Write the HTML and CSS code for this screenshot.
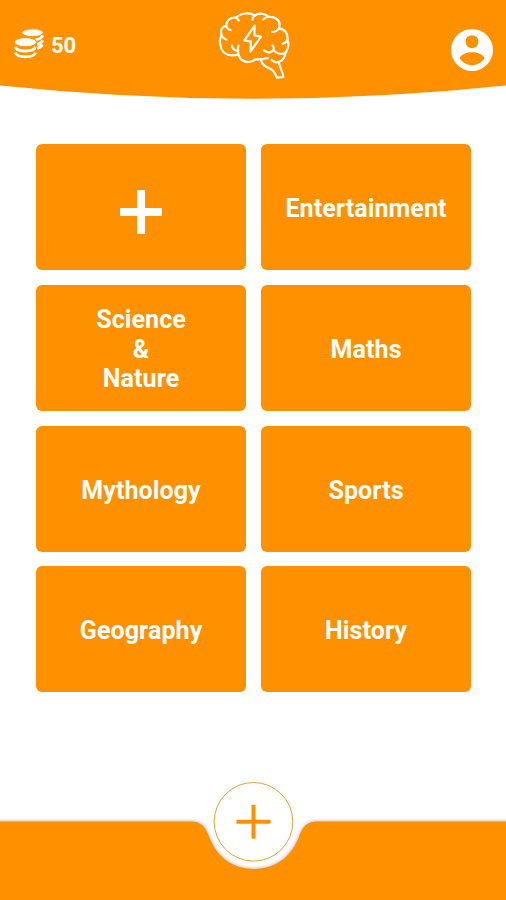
FILE: index.html
```html
<!DOCTYPE html>
<html lang="en">
<head>
<meta charset="utf-8">
<title>Quiz categories</title>
<link rel="stylesheet" href="styles.css">
</head>
<body>
<div class="app">
  <header class="header">
    <svg class="header-bg" viewBox="0 0 506 100"><path d="M0 0H506V85.5Q379 98.8 253 98.8T0 85.5Z"/></svg>
    <div class="coins">
      <svg class="coins-icon" viewBox="0 0 92 94">
        <ellipse class="solid" cx="57" cy="14" rx="33" ry="12"/>
        <path d="M88 22Q84 34 66 35M88 37Q84 47 71 50M87 50Q83 58 71 61"/>
        <ellipse class="solid" cx="35" cy="43" rx="34" ry="14"/>
        <path d="M4 58C10 74 60 74 66 58M4 75C10 92 60 92 66 75"/>
      </svg>
      <span class="coins-count">50</span>
    </div>
    <svg class="brain" viewBox="0 0 300 252">
      <path d="M97 163C78 171 47 164 44 138C40 126 41 114 47 107C42 87 49 79 61 77C60 61 75 50 91 53C103 39 131 36 146 47C157 37 180 40 187 51C206 49 221 59 221 75C221 79 220 82 218 86C235 87 247 99 244 119C251 134 245 150 238 158C239 169 231 181 218 186C221 203 231 214 232 231L213 233C206 219 204 212 194 207C178 201 166 192 165 178"/>
      <path d="M97 137C95 148 94 163 102 174C112 188 136 190 148 178C158 179 174 177 185 174M47 107C51 113 54 117 61 119M61 77C62 84 67 89 74 90M91 53L98 61M146 47C141 51 139 54 139 59M187 51C180 51 175 54 172 58M218 86C214 92 207 96 198 96M244 119C242 125 237 129 230 131M78 137C79 147 87 153 97 152M174 151C183 161 199 158 203 148C204 143 202 139 200 136M203 150C211 162 226 164 239 158M197 180C203 186 211 188 218 186"/>
      <path d="M146 77L115 121L135 125L133 155L165 110L145 106Z"/>
    </svg>
    <svg class="profile" viewBox="0 0 42 42">
      <circle class="disc" cx="21" cy="21" r="21"/>
      <circle cx="21" cy="12.7" r="6.5"/>
      <path d="M8.5 29C12 21.3 30 21.3 33.5 29C28 38.5 14 38.5 8.5 29Z"/>
    </svg>
  </header>
  <main class="grid">
    <button class="card" aria-label="Add category"><svg class="plus" viewBox="0 0 42 44"><path d="M0 22H42M21 0V44"/></svg></button>
    <button class="card">Entertainment</button>
    <button class="card">Science<br>&amp;<br>Nature</button>
    <button class="card">Maths</button>
    <button class="card">Mythology</button>
    <button class="card">Sports</button>
    <button class="card">Geography</button>
    <button class="card">History</button>
  </main>
  <footer class="footer">
    <svg class="bar" viewBox="0 0 506 130">
      <defs>
        <clipPath id="bar-clip"><path d="M0 51.5H192Q203 51.5 208 64C215 85 231 99 254 99S293 85 300 64Q305 51.5 316 51.5H506V130H0Z"/></clipPath>
        <filter id="soft" x="-10%" y="-50%" width="120%" height="200%"><feGaussianBlur stdDeviation="2"/></filter>
      </defs>
      <path class="bar-shadow" filter="url(#soft)" d="M-9 51.5H192Q203 51.5 208 64C215 85 231 99 254 99S293 85 300 64Q305 51.5 316 51.5H515V140H-9Z"/>
      <rect class="bar-fill" width="506" height="130" clip-path="url(#bar-clip)"/>
      <circle class="ring" cx="253.5" cy="51.8" r="39.3"/>
      <path class="ring-plus" d="M236.5 51.8H270.5M253.5 34.8V68.8"/>
    </svg>
  </footer>
</div>
</body>
</html>
```
FILE: styles.css
```css
body {
  margin: 0;
  background: #fff;
  font-family: Roboto, sans-serif;
}

.app {
  display: flex;
  flex-direction: column;
  height: 900px;
  overflow: hidden;
}

.header {
  position: relative;
  display: flex;
  justify-content: space-between;
  height: 100px;
  box-sizing: border-box;
  padding: 0 13px 0 14px;
}

.header-bg {
  position: absolute;
  inset: 0;
  width: 100%;
  height: 100px;
  fill: #ff9100;
}

.coins {
  position: relative;
  display: flex;
  align-items: center;
  gap: 7px;
  width: 191px;
  height: 30px;
  margin-top: 29px;
  color: #fff;
}

.coins-icon {
  width: 30px;
  height: 31px;
  margin-top: -2px;
  fill: none;
  stroke: #fff;
  stroke-width: 9;
}

.coins-icon .solid {
  fill: #fff;
  stroke: #ff9100;
  stroke-width: 3;
}

.coins-count {
  margin-top: 3px;
  font-size: 22px;
  font-weight: 700;
  line-height: 26px;
}

.brain {
  position: relative;
  width: 100px;
  height: 84px;
  margin-left: 1px;
  fill: none;
  stroke: #fff;
  stroke-width: 6.5;
  stroke-linecap: round;
  stroke-linejoin: round;
}

.profile {
  position: relative;
  width: 42px;
  height: 42px;
  margin: 29px 0 0 145px;
  fill: #ff9100;
}

.profile .disc {
  fill: #fff;
}

.grid {
  display: grid;
  grid-template-columns: 210.5px 210.5px;
  grid-auto-rows: 126px;
  gap: 14.75px 14.5px;
  margin: 44px 0 0 35.8px;
}

.card {
  display: flex;
  align-items: center;
  justify-content: center;
  padding: 3.6px 0 0;
  border: 0;
  border-radius: 6px;
  background: #ff9100;
  color: #fff;
  font: 700 25px/29.5px Roboto, sans-serif;
  letter-spacing: 0.1px;
  text-align: center;
}

.plus {
  width: 42px;
  height: 44px;
  margin-top: 6px;
  stroke: #fff;
  stroke-width: 8;
}

.footer {
  height: 130px;
  margin-top: auto;
}

.bar {
  display: block;
  width: 506px;
  height: 130px;
}

.bar-shadow {
  fill: #000;
  opacity: 0.35;
}

.bar-fill {
  fill: #ff9100;
}

.ring {
  fill: #fff;
  stroke: #dca63c;
  stroke-width: 1;
}

.ring-plus {
  stroke: #ff9100;
  stroke-width: 4;
}
```
